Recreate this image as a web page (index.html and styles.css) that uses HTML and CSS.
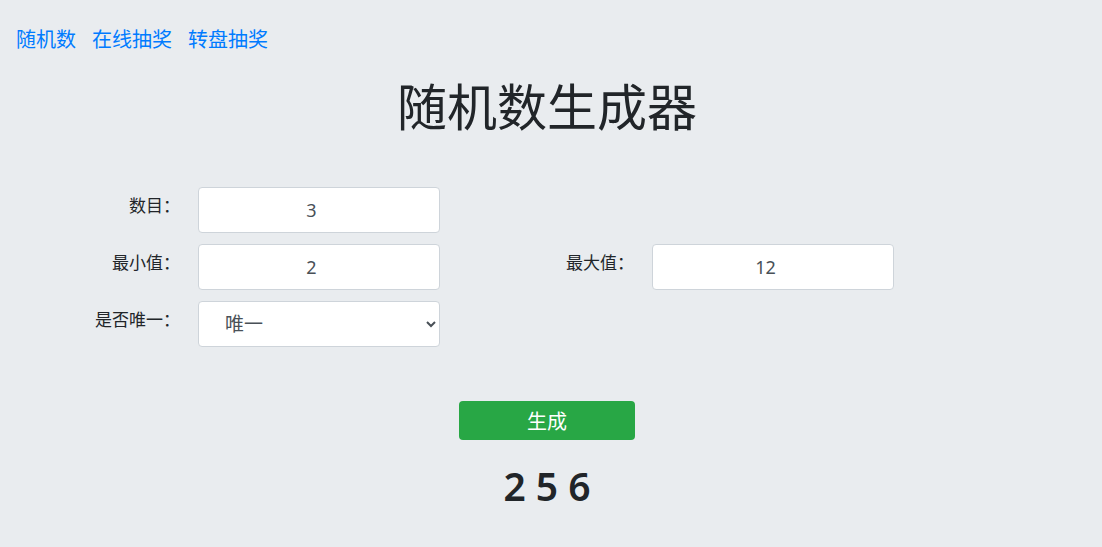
FILE: index.html
```html
<!DOCTYPE html>
<html lang="zh-CN">
<head>
  <meta charset="UTF-8">
  <meta name="viewport" content="width=device-width, initial-scale=1.0">
  <title>随机数生成器</title>
  <link rel="stylesheet" href="styles.css">
</head>
<body>

  <nav class="top-nav">
    <a href="#">随机数</a>
    <a href="#">在线抽奖</a>
    <a href="#">转盘抽奖</a>
  </nav>

  <h1 class="title">随机数生成器</h1>

  <form id="random-form" class="random-form">
    <div class="form-row">
      <div class="field">
        <label for="count">数目：</label>
        <input type="number" id="count" value="3">
      </div>
    </div>
    <div class="form-row">
      <div class="field">
        <label for="min">最小值：</label>
        <input type="number" id="min" value="2">
      </div>
      <div class="field">
        <label for="max">最大值：</label>
        <input type="number" id="max" value="12">
      </div>
    </div>
    <div class="form-row">
      <div class="field">
        <label for="unique">是否唯一：</label>
        <select id="unique">
          <option value="true">唯一</option>
          <option value="false">不唯一</option>
        </select>
      </div>
    </div>

    <div class="actions">
      <button type="submit">生成</button>
    </div>
  </form>

  <div class="result" id="result">2 5 6</div>

  <script>
    document.getElementById('random-form').addEventListener('submit', function (e) {
      e.preventDefault();
      const count = parseInt(document.getElementById('count').value, 10);
      const min = parseInt(document.getElementById('min').value, 10);
      const max = parseInt(document.getElementById('max').value, 10);
      const unique = document.getElementById('unique').value === 'true';
      const nums = [];
      let guard = 0;
      while (nums.length < count && guard < 10000) {
        guard++;
        const n = Math.floor(Math.random() * (max - min + 1)) + min;
        if (unique && nums.includes(n)) continue;
        nums.push(n);
      }
      nums.sort(function (a, b) { return a - b; });
      document.getElementById('result').textContent = nums.join(' ');
    });
  </script>
</body>
</html>
```

FILE: styles.css
```css
body {
  font-family: "Noto Sans", "Noto Sans CJK SC", sans-serif;
  margin: 0;
  padding: 25px 24px 0 16px;
  background-color: #e9ecef;
  color: #212529;
}

.top-nav {
  display: flex;
  gap: 16px;
  font-size: 20px;
  line-height: 30px;
}

.top-nav a {
  color: #007bff;
  text-decoration: none;
}

.title {
  margin: 22px 0 0;
  font-size: 50px;
  font-weight: normal;
  line-height: 60px;
  text-align: center;
}

.random-form {
  margin-top: 50px;
}

.form-row {
  display: flex;
  gap: 30px;
  margin-bottom: 11px;
}

.field {
  display: flex;
  align-items: flex-start;
}

.field label {
  width: 182px;
  box-sizing: border-box;
  padding: 7px 18px 0 0;
  text-align: right;
  font-size: 17px;
  line-height: 24px;
}

.field input, .field select {
  width: 242px;
  height: 46px;
  box-sizing: border-box;
  border: 1px solid #ced4da;
  border-radius: 4px;
  background-color: #fff;
  color: #495057;
  font-family: inherit;
  font-size: 18px;
}

.field input {
  padding: 0 12px;
  text-align: center;
}

.field select {
  padding: 0 8px 0 22px;
  font-size: 19px;
}

.actions {
  display: flex;
  justify-content: center;
  margin-top: 54px;
}

.actions button {
  width: 176px;
  height: 39px;
  border: none;
  border-radius: 4px;
  background-color: #28a745;
  color: #fff;
  font-family: inherit;
  font-size: 20px;
  cursor: pointer;
}

.result {
  margin-top: 21px;
  font-size: 39px;
  font-weight: 600;
  line-height: 50px;
  text-align: center;
}
```
